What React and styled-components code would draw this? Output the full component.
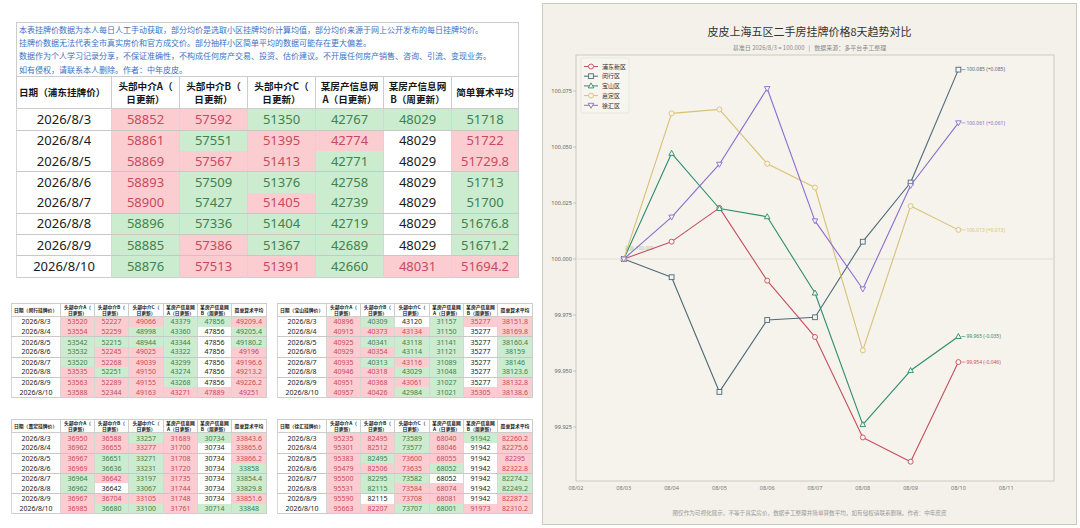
import React from 'react';
import styled, { createGlobalStyle } from 'styled-components';

const GlobalStyle = createGlobalStyle`
  html, body { margin: 0; padding: 0; background: #fff; }
  body { font-family: "Noto Sans", "Noto Sans CJK SC", sans-serif; }
`;

const DATES = ['2026/8/3', '2026/8/4', '2026/8/5', '2026/8/6', '2026/8/7', '2026/8/8', '2026/8/9', '2026/8/10'];

const HEADS = [
    ['头部中介A（', '日更新）'],
    ['头部中介B（', '日更新）'],
    ['头部中介C（', '日更新）'],
    ['某房产信息网', 'A（日更新）'],
    ['某房产信息网', 'B（周更新）'],
    ['简单算术平均'],
];

// p = 上涨(红), g = 下跌(绿), w = 持平
const PUDONG = [
    '58852p 57592p 51350g 42767g 48029g 51718g',
    '58861p 57551g 51395p 42774p 48029w 51722p',
    '58869p 57567p 51413p 42771g 48029w 51729.8p',
    '58893p 57509g 51376g 42758g 48029w 51713g',
    '58900p 57427g 51405p 42739g 48029w 51700g',
    '58896g 57336g 51404g 42719g 48029w 51676.8g',
    '58885g 57386p 51367g 42689g 48029w 51671.2g',
    '58876g 57513p 51391p 42660g 48031p 51694.2p',
];
const MINHANG = [
    '53520p 52227p 49066p 43379g 47856g 49209.4p',
    '53554p 52259p 48998g 43360g 47856w 49205.4g',
    '53542g 52215g 48944g 43344g 47856w 49180.2g',
    '53532g 52245p 49025p 43322g 47856w 49196p',
    '53520g 52268p 49039p 43299g 47856w 49196.6p',
    '53535p 52251g 49150p 43274g 47856w 49213.2p',
    '53563p 52289p 49155p 43268g 47856w 49226.2p',
    '53588p 52344p 49163p 43271p 47889p 49251p',
];
const BAOSHAN = [
    '40896p 40309g 43120w 31157g 35277p 38151.8p',
    '40915p 40373p 43134p 31150g 35277w 38169.8p',
    '40925p 40341g 43118g 31141g 35277w 38160.4g',
    '40929p 40354p 43114g 31121g 35277w 38159g',
    '40935p 40313g 43116p 31089g 35277w 38146g',
    '40946p 40318p 43029g 31048g 35277w 38123.6g',
    '40951p 40368p 43061p 31027g 35277w 38132.8p',
    '40957p 40426p 42984g 31021g 35305p 38138.6p',
];
const JIADING = [
    '36950p 36588p 33257g 31689p 30734g 33843.6p',
    '36962p 36655p 33277p 31700p 30734w 33865.6p',
    '36967p 36651g 33271g 31708p 30734w 33866.2p',
    '36969p 36636g 33231g 31720p 30734w 33858g',
    '36964g 36642p 33197g 31735p 30734w 33854.4g',
    '36962g 36642w 33067g 31744p 30734w 33829.8g',
    '36967p 36704p 33105p 31748p 30734w 33851.6p',
    '36985p 36680g 33100g 31761p 30714g 33848g',
];
const XUHUI = [
    '95235p 82495p 73589g 68040p 91942g 82260.2p',
    '95301p 82512p 73577g 68046p 91942w 82275.6p',
    '95383p 82495g 73600p 68055p 91942w 82295p',
    '95479p 82506p 73635p 68052g 91942w 82322.8p',
    '95500p 82295g 73582g 68052w 91942w 82274.2g',
    '95531p 82115g 73584p 68074p 91942w 82249.2g',
    '95590p 82115w 73708p 68081p 91942w 82287.2p',
    '95663p 82207p 73707g 68001g 91973p 82310.2p',
];

const parseRow = (s) => s.split(' ').map((t) => ({ value: t.slice(0, -1), tone: t.slice(-1) }));

const TONES = {
    p: { bg: '#fbcdd1', fg: '#c9495d' },
    g: { bg: '#cbecce', fg: '#3d8250' },
    w: { bg: '#ffffff', fg: '#1b1b1b' },
};

const SERIES = [
    { name: '浦东新区', color: '#c64f5d', marker: 'circle', rows: PUDONG },
    { name: '闵行区', color: '#4c6a7a', marker: 'square', rows: MINHANG },
    { name: '宝山区', color: '#2f8b70', marker: 'up', rows: BAOSHAN },
    { name: '嘉定区', color: '#d9c172', marker: 'circle', rows: JIADING },
    { name: '徐汇区', color: '#8b6dd0', marker: 'down', rows: XUHUI },
];

const Page = styled.div`
    display: flex;
    width: 1080px;
    height: 528px;
    overflow: hidden;
    background: #fff;
`;

const LeftColumn = styled.div`
    width: 542px;
    flex: none;
    box-sizing: border-box;
    padding: 22px 0 0 11px;
`;

const SmallGrid = styled.div`
    display: grid;
    grid-template-columns: 255px 256px;
    column-gap: 11px;
    row-gap: 21px;
    margin-top: 25px;
`;

const Sheet = styled.table`
    width: ${(p) => p.$width}px;
    margin-left: ${(p) => p.$offset || 0}px;
    table-layout: fixed;
    border-collapse: collapse;
    border: 1px solid #cdcdcd;
    background: #fff;
    font-family: "Noto Sans", "Noto Sans CJK SC", sans-serif;
`;

const NoteCell = styled.td`
    height: 51px;
    padding: 0 2px;
    color: #3a71c5;
    font-family: "Noto Sans CJK SC", sans-serif;
    font-size: 8px;
    line-height: 13.2px;
    white-space: nowrap;
    vertical-align: middle;
    border-bottom: 1px solid #cdcdcd;
`;

const HeadCell = styled.th`
    height: ${(p) => (p.$sm ? 12.5 : 31.5)}px;
    padding: ${(p) => (p.$lead ? '0 0 0 2px' : '0')};
    border: 1px solid #cdcdcd;
    font-family: "Noto Sans CJK SC", sans-serif;
    font-size: ${(p) => (p.$sm ? 4.8 : 9.6)}px;
    line-height: ${(p) => (p.$sm ? 6 : 13)}px;
    font-weight: 700;
    color: #161616;
    text-align: ${(p) => (p.$lead ? 'left' : 'center')};
    white-space: nowrap;
    overflow: hidden;
`;

const DataCell = styled.td`
    height: ${(p) => (p.$sm ? 9.6 : 20.3)}px;
    padding: 0;
    border-left: 1px solid #d6d6d6;
    border-bottom: ${(p) => (p.$split ? '1px solid #c8c8c8' : 'none')};
    background: ${(p) => TONES[p.$tone].bg};
    color: ${(p) => TONES[p.$tone].fg};
    font-size: ${(p) => (p.$sm ? 7 : 13)}px;
    line-height: 1;
    text-align: center;
    white-space: nowrap;
`;

const ChartPanel = styled.section`
    width: 535px;
    height: 522px;
    margin-top: 3px;
    flex: none;
    box-sizing: border-box;
    border: 1px solid #ccc9bd;
    background: #f3f1e9;
    display: flex;
    flex-direction: column;
    align-items: center;
    font-family: "Noto Sans CJK SC", sans-serif;
`;

const ChartTitle = styled.h1`
    margin: 19px 0 0;
    font-size: 11px;
    line-height: 16px;
    font-weight: 400;
    color: #333;
`;

const ChartSubtitle = styled.div`
    margin-top: 4px;
    font-size: 6px;
    line-height: 10px;
    color: #8a8a8a;
    white-space: pre;
`;

const ChartSvg = styled.svg`
    display: block;
    flex: none;
    text {
        font-family: "Noto Sans", "Noto Sans CJK SC", sans-serif;
    }
`;

const ChartFooter = styled.div`
    margin-top: 13px;
    font-size: 5.6px;
    line-height: 10px;
    color: #9a9a9a;
`;

function PriceTable({ district, rows, sm, width, offset, splits, notes, cols }) {
    return (
        <Sheet $width={width} $offset={offset}>
            <colgroup>
                {cols.map((w, i) => <col key={i} style={{ width: w }} />)}
            </colgroup>
            <tbody>
                {notes && (
                    <tr>
                        <NoteCell colSpan={7}>
                            {notes.map((line) => <div key={line}>{line}</div>)}
                        </NoteCell>
                    </tr>
                )}
                <tr>
                    <HeadCell $sm={sm} $lead>日期（{district}挂牌价）</HeadCell>
                    {HEADS.map((h) => (
                        <HeadCell key={h.join('')} $sm={sm}>
                            {h[0]}{h[1] && <br />}{h[1]}
                        </HeadCell>
                    ))}
                </tr>
                {rows.map((row, r) => {
                    const split = splits.includes(r);
                    return (
                        <tr key={DATES[r]}>
                            <DataCell $sm={sm} $tone='w' $split={split}>{DATES[r]}</DataCell>
                            {parseRow(row).map((c, i) => (
                                <DataCell key={i} $sm={sm} $tone={c.tone} $split={split}>{c.value}</DataCell>
                            ))}
                        </tr>
                    );
                })}
            </tbody>
        </Sheet>
    );
}

const NOTES = [
    '本表挂牌价数据为本人每日人工手动获取，部分均价是选取小区挂牌均价计算均值，部分均价来源于网上公开发布的每日挂牌均价。',
    '挂牌价数据无法代表全市真实房价和官方成交价。部分抽样小区简单平均的数据可能存在更大偏差。',
    '数据作为个人学习记录分享，不保证准确性，不构成任何房产交易、投资、估价建议。不开展任何房产销售、咨询、引流、变现业务。',
    '如有侵权，请联系本人删除。作者：中年皮皮。',
];

// chart geometry (svg coords)
const X0 = 33;
const DX = 47.8;
const Y0 = 206;
const K = 2240;
const PLOT = { x: 33, y: 2, w: 478, h: 426 };
const px = (i) => X0 + i * DX;
const py = (v) => Y0 - (v - 100) * K;

function Marker({ type, x, y, color }) {
    const fill = '#f5f3ec';
    if (type === 'square') {
        return <rect x={x - 2.4} y={y - 2.4} width={4.8} height={4.8} fill={fill} stroke={color} strokeWidth={0.9} />;
    }
    if (type === 'up') {
        return <polygon points={`${x},${y - 3} ${x - 2.8},${y + 2} ${x + 2.8},${y + 2}`} fill={fill} stroke={color} strokeWidth={0.9} />;
    }
    if (type === 'down') {
        return <polygon points={`${x},${y + 3} ${x - 2.8},${y - 2} ${x + 2.8},${y - 2}`} fill={fill} stroke={color} strokeWidth={0.9} />;
    }
    return <circle cx={x} cy={y} r={2.5} fill={fill} stroke={color} strokeWidth={0.9} />;
}

function TrendChart() {
    const lines = SERIES.map((s) => {
        const avgs = s.rows.map((r) => parseFloat(parseRow(r)[5].value));
        const idx = avgs.map((v) => (v / avgs[0]) * 100);
        return { ...s, idx };
    });
    const yTicks = [100.075, 100.05, 100.025, 100, 99.975, 99.95, 99.925];
    const xLabels = ['08/02', '08/03', '08/04', '08/05', '08/06', '08/07', '08/08', '08/09', '08/10', '08/11'];

    return (
        <ChartSvg width={533} height={442} viewBox='0 0 533 442'>
            <rect x={PLOT.x} y={PLOT.y} width={PLOT.w} height={PLOT.h} fill='#f5f3ec' stroke='#c3c0b4' strokeWidth={0.8} />
            <line x1={PLOT.x} x2={PLOT.x + PLOT.w} y1={Y0} y2={Y0} stroke='#dcd9ce' strokeWidth={0.8} />

            {yTicks.map((v) => (
                <g key={v}>
                    <line x1={PLOT.x - 3} x2={PLOT.x} y1={py(v)} y2={py(v)} stroke='#999' strokeWidth={0.5} />
                    <text x={PLOT.x - 4} y={py(v) + 2} fontSize={5.6} fill='#666' textAnchor='end'>{v.toFixed(3)}</text>
                </g>
            ))}
            {xLabels.map((l, i) => (
                <text key={l} x={px(i)} y={437} fontSize={5.6} fill='#777' textAnchor='middle'>{l}</text>
            ))}

            <text x={px(1) + 1} y={Y0 - 9} fontSize={4.8} fill='#a6c7ab'>基准 100.000</text>

            {lines.map((s) => (
                <g key={s.name}>
                    <polyline
                        points={s.idx.map((v, i) => `${px(i + 1)},${py(v)}`).join(' ')}
                        fill='none'
                        stroke={s.color}
                        strokeWidth={1.1}
                        strokeLinejoin='round'
                    />
                    {s.idx.map((v, i) => (
                        <Marker key={i} type={s.marker} x={px(i + 1)} y={py(v)} color={s.color} />
                    ))}
                </g>
            ))}

            {lines.map((s) => {
                const last = s.idx[s.idx.length - 1];
                const diff = last - 100;
                const x = px(8);
                const y = py(last);
                return (
                    <g key={s.name + '-end'}>
                        <line x1={x + 3} x2={x + 7} y1={y} y2={y} stroke={s.color} strokeWidth={0.6} />
                        <text x={x + 8} y={y + 1.8} fontSize={5} fill={s.color}>
                            {last.toFixed(3)}  ({diff >= 0 ? '+' : ''}{diff.toFixed(3)})
                        </text>
                    </g>
                );
            })}

            <rect x={38} y={5} width={48} height={55} rx={2} fill='#f7f5ef' stroke='#e0ddd2' strokeWidth={0.6} />
            {lines.map((s, k) => {
                const y = 13.5 + k * 9.7;
                return (
                    <g key={s.name + '-legend'}>
                        <line x1={41} x2={55} y1={y} y2={y} stroke={s.color} strokeWidth={1} />
                        <Marker type={s.marker} x={48} y={y} color={s.color} />
                        <text x={59} y={y + 2.2} fontSize={6} fill='#333'>{s.name}</text>
                    </g>
                );
            })}
        </ChartSvg>
    );
}

const BIG_COLS = [95, 68, 68, 68, 68, 68, 67];
const SMALL_COLS = [49, 34, 34, 35, 34, 34, 35];

export default function App() {
    return (
        <Page>
            <GlobalStyle />
            <LeftColumn>
                <PriceTable
                    district='浦东'
                    rows={PUDONG}
                    width={502}
                    offset={5}
                    cols={BIG_COLS}
                    splits={[0, 2, 4, 5, 6]}
                    notes={NOTES}
                />
                <SmallGrid>
                    <PriceTable sm district='闵行' rows={MINHANG} width={255} cols={SMALL_COLS} splits={[1, 3, 5]} />
                    <PriceTable sm district='宝山' rows={BAOSHAN} width={256} cols={SMALL_COLS} splits={[1, 3, 5]} />
                    <PriceTable sm district='嘉定' rows={JIADING} width={255} cols={SMALL_COLS} splits={[1, 3, 5]} />
                    <PriceTable sm district='徐汇' rows={XUHUI} width={256} cols={SMALL_COLS} splits={[1, 3, 5]} />
                </SmallGrid>
            </LeftColumn>
            <ChartPanel>
                <ChartTitle>皮皮上海五区二手房挂牌价格8天趋势对比</ChartTitle>
                <ChartSubtitle>基准日 2026/8/3 = 100.000   |   数据来源：多平台手工整理</ChartSubtitle>
                <TrendChart />
                <ChartFooter>图仅作为可视化展示，不等于真实房价，数据手工整理并简单算数平均，如有侵权请联系删除。作者：中年皮皮</ChartFooter>
            </ChartPanel>
        </Page>
    );
}
